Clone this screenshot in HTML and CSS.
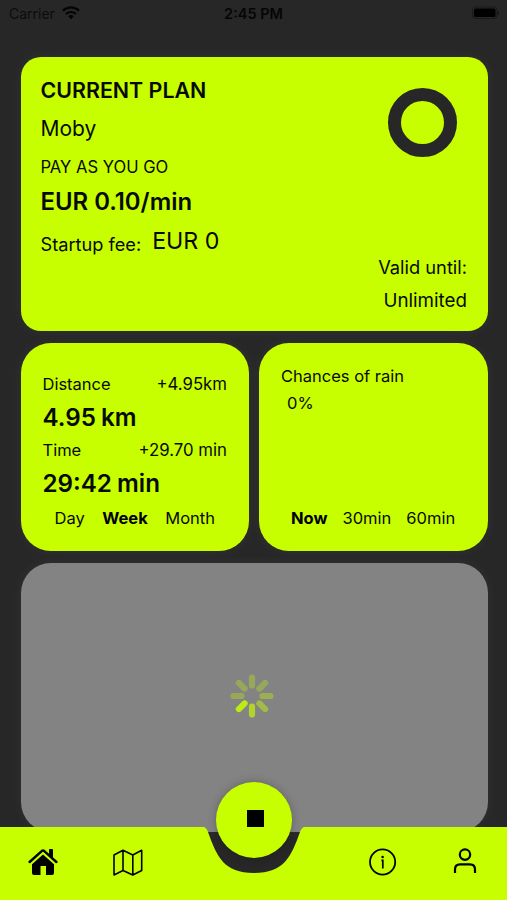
FILE: index.html
```html
<!DOCTYPE html>
<html lang="en">
<head>
    <meta charset="UTF-8">
    <meta name="viewport" content="width=device-width, initial-scale=1.0">
    <title>Current Plan</title>
    <link rel="stylesheet" href="styles.css">
</head>
<body>
    <header class="status-bar">
        <div class="carrier">
            <span>Carrier</span>
            <svg width="18" height="14" viewBox="0 0 18 14">
                <path d="M1 4.6a11.6 11.6 0 0 1 16 0" fill="none" stroke="#050505" stroke-width="2.4"/>
                <path d="M4 8a7.2 7.2 0 0 1 10 0" fill="none" stroke="#050505" stroke-width="2.2"/>
                <path d="M6.2 10.3a4 4 0 0 1 5.6 0L9 13.2z" fill="#050505"/>
            </svg>
        </div>
        <div class="clock">2:45 PM</div>
        <div class="power">
            <svg width="28" height="14" viewBox="0 0 28 14">
                <rect x="0.5" y="1" width="24.5" height="11.5" rx="3" fill="none" stroke="#19191a"/>
                <rect x="2" y="2.5" width="21.5" height="8.5" rx="1.5" fill="#000"/>
                <path d="M26 5v4" stroke="#19191a" stroke-width="1.5"/>
            </svg>
        </div>
    </header>

    <main>
        <section class="card plan">
            <div class="plan-info">
                <h1>CURRENT PLAN</h1>
                <div class="plan-name">Moby</div>
                <div class="plan-type">PAY AS YOU GO</div>
                <div class="plan-price">EUR 0.10/min</div>
                <div class="startup">
                    <span class="startup-label">Startup fee:</span>
                    <span class="startup-value">EUR 0</span>
                </div>
            </div>
            <div class="plan-side">
                <div class="ring"></div>
                <div class="valid">
                    <div>Valid until:</div>
                    <div class="unlimited">Unlimited</div>
                </div>
            </div>
        </section>

        <div class="row">
            <section class="card stats">
                <div class="stat-line"><span>Distance</span><span class="diff">+4.95km</span></div>
                <div class="stat-value">4.95 km</div>
                <div class="stat-line"><span>Time</span><span class="diff">+29.70 min</span></div>
                <div class="stat-value">29:42 min</div>
                <div class="tabs period">
                    <span>Day</span>
                    <span class="active">Week</span>
                    <span>Month</span>
                </div>
            </section>
            <section class="card rain">
                <div class="rain-title">Chances of rain</div>
                <div class="rain-value">0%</div>
                <div class="tabs forecast">
                    <span class="active">Now</span>
                    <span>30min</span>
                    <span>60min</span>
                </div>
            </section>
        </div>

        <section class="map">
            <svg width="44" height="44" viewBox="-22 -22 44 44" stroke="#c8ff00" stroke-width="6.2" stroke-linecap="round">
                <path d="M0 -10.5V-18.5" opacity="0.3"/>
                <path d="M0 -10.5V-18.5" opacity="0.3" transform="rotate(45)"/>
                <path d="M0 -10.5V-18.5" opacity="0.35" transform="rotate(90)"/>
                <path d="M0 -10.5V-18.5" opacity="0.45" transform="rotate(135)"/>
                <path d="M0 -10.5V-18.5" opacity="0.65" transform="rotate(180)"/>
                <path d="M0 -10.5V-18.5" opacity="0.85" transform="rotate(225)"/>
                <path d="M0 -10.5V-18.5" opacity="0.3" transform="rotate(270)"/>
                <path d="M0 -10.5V-18.5" opacity="0.3" transform="rotate(315)"/>
            </svg>
        </section>
    </main>

    <nav class="tab-bar">
        <svg class="bar-shape" width="507" height="74" viewBox="0 0 507 74">
            <path d="M0 0H204C206 1 207 2.500 208 5C217 30 224 46 254 46C284 46 291 30 300 5C301 2.500 302 1 304 0H507V74H0Z" fill="#c8ff00"/>
        </svg>
        <button class="stop" aria-label="Stop"></button>
        <div class="tab-items">
            <a href="#" aria-label="Home">
                <svg width="30" height="28" viewBox="0 0 30 28">
                    <path d="M1.600 14L14 2.800Q15 2 16 2.800L28.400 14" fill="none" stroke="#000" stroke-width="2.400" stroke-linecap="round" stroke-linejoin="round"/>
                    <path d="M21.500 1.500h3v8L21.500 6.800z" fill="#000" stroke="#000" stroke-width="1" stroke-linejoin="round"/>
                    <path d="M15 6.500L26 16.300V25Q26 27 24 27H18V18H12.500V27H6Q4 27 4 25V16.300Z" fill="#000"/>
                </svg>
            </a>
            <a href="#" aria-label="Map">
                <svg width="30" height="28" viewBox="0 0 30 28" fill="none" stroke="#000" stroke-width="1.600" stroke-linejoin="round">
                    <path d="M1 7L10 2.300L19.800 7L28.700 2.300V22.500L19.800 27L10 22.500L1 27ZM10 2.300V22.500M19.800 7V27"/>
                </svg>
            </a>
            <a href="#" aria-label="Info">
                <svg width="28" height="28" viewBox="0 0 28 28">
                    <circle cx="13.600" cy="14" r="12.600" fill="none" stroke="#000" stroke-width="1.800"/>
                    <circle cx="13.600" cy="9" r="1.300" fill="#000"/>
                    <path d="M12.400 12.300H13.800V20.500" fill="none" stroke="#000" stroke-width="1.700"/>
                </svg>
            </a>
            <a href="#" aria-label="Profile">
                <svg width="24" height="26" viewBox="0 0 24 26" fill="none" stroke="#000" stroke-width="2.200">
                    <circle cx="12" cy="6.600" r="5.200"/>
                    <path d="M2 25V21.500Q2 16.400 7 16.400H17Q22 16.400 22 21.500V25"/>
                </svg>
            </a>
        </div>
    </nav>
</body>
</html>
```
FILE: styles.css
```css
* {
    box-sizing: border-box;
}
body {
    margin: 0;
    height: 900px;
    overflow: hidden;
    position: relative;
    background-color: #272728;
    color: #070a00;
    font-family: Inter, "Liberation Sans", sans-serif;
}
.status-bar {
    display: flex;
    justify-content: space-between;
    height: 57px;
    padding: 0 7px 0 9px;
    line-height: 28px;
    font-size: 13.5px;
    color: #050505;
}
.carrier, .power {
    flex: 1;
    display: flex;
    height: 28px;
}
.carrier {
    gap: 7px;
    font-size: 14px;
    color: #0c0c0c;
}
.carrier svg {
    margin-top: 6px;
}
.clock {
    margin: 0 1px 0 -1px;
    font-size: 14.5px;
    font-weight: 600;
}
.power {
    justify-content: flex-end;
}
.power svg {
    margin-top: 6px;
}
main {
    padding: 0 19.5px 0 20.5px;
}
.card {
    background: #c8ff00;
    box-shadow: 0 0 14px rgba(255, 255, 255, 0.05);
}
.plan {
    display: flex;
    justify-content: space-between;
    height: 274px;
    padding: 18px 20.5px 14px 20px;
    border-radius: 20px;
}
h1 {
    margin: 0;
    font-size: 21.4px;
    font-weight: 600;
    line-height: 30px;
}
.plan-name {
    font-size: 21px;
    line-height: 47px;
}
.plan-type {
    font-size: 16.6px;
    line-height: 30px;
}
.plan-price {
    font-size: 23.9px;
    font-weight: 600;
    line-height: 40px;
}
.startup {
    display: flex;
    gap: 11px;
    line-height: 39px;
}
.startup-label {
    padding-top: 3px;
    font-size: 18.2px;
}
.startup-value {
    font-size: 23.2px;
}
.plan-side {
    display: flex;
    flex-direction: column;
    justify-content: space-between;
    align-items: flex-end;
}
.ring {
    width: 69px;
    height: 69px;
    margin: 13px 10px 0 0;
    border: 13.5px solid #272728;
    border-radius: 50%;
}
.valid {
    font-size: 18.3px;
    line-height: 33px;
    text-align: right;
}
.unlimited {
    font-size: 18.8px;
}
.row {
    display: flex;
    gap: 10px;
    margin: 12.4px 0;
}
.row .card {
    flex: 1;
    height: 207.2px;
    border-radius: 30px;
    font-size: 16.5px;
}
.stats {
    padding: 24.7px 22px 0;
}
.stat-line {
    display: flex;
    justify-content: space-between;
    line-height: 33px;
}
.diff {
    font-size: 16.8px;
}
.stat-value {
    font-size: 24.2px;
    font-weight: 600;
    line-height: 33px;
    word-spacing: -1px;
}
.tabs {
    display: flex;
    line-height: 36px;
}
.tabs .active {
    font-weight: 700;
    color: #000;
}
.period {
    gap: 17.5px;
    padding-left: 12px;
}
.rain {
    display: flex;
    flex-direction: column;
    padding: 19.7px 22px 14.5px;
}
.rain-title {
    line-height: 27px;
}
.rain-value {
    padding-left: 6px;
    line-height: 27px;
}
.forecast {
    gap: 15px;
    margin-top: auto;
    padding-left: 10px;
}
.map {
    display: flex;
    align-items: center;
    justify-content: center;
    height: 269px;
    padding: 0 4px 3px 0;
    border-radius: 30px;
    background: #838383;
    box-shadow: 0 0 14px rgba(255, 255, 255, 0.05);
}
/* the bar floats over the bottom of the map */
.tab-bar {
    position: absolute;
    left: 0;
    right: 0;
    bottom: 0;
    height: 73px;
}
.bar-shape {
    display: block;
}
.stop {
    position: absolute;
    left: 216px;
    top: -45.5px;
    width: 76px;
    height: 76px;
    padding: 0;
    border: none;
    border-radius: 50%;
    background: #c8ff00;
    box-shadow: 0 0 8px rgba(0, 0, 0, 0.25);
}
.stop::before {
    content: "";
    display: block;
    width: 17px;
    height: 17px;
    margin: -2px 0 0 31px;
    background: #000;
}
.tab-items {
    position: absolute;
    inset: 0;
    display: grid;
    grid-template-columns: 85px 85px 170px 85px 80px;
    padding-top: 21px;
}
.tab-items a {
    display: flex;
    justify-content: center;
    height: 28px;
}
.tab-items a:nth-child(3) {
    grid-column: 4;
}
```
